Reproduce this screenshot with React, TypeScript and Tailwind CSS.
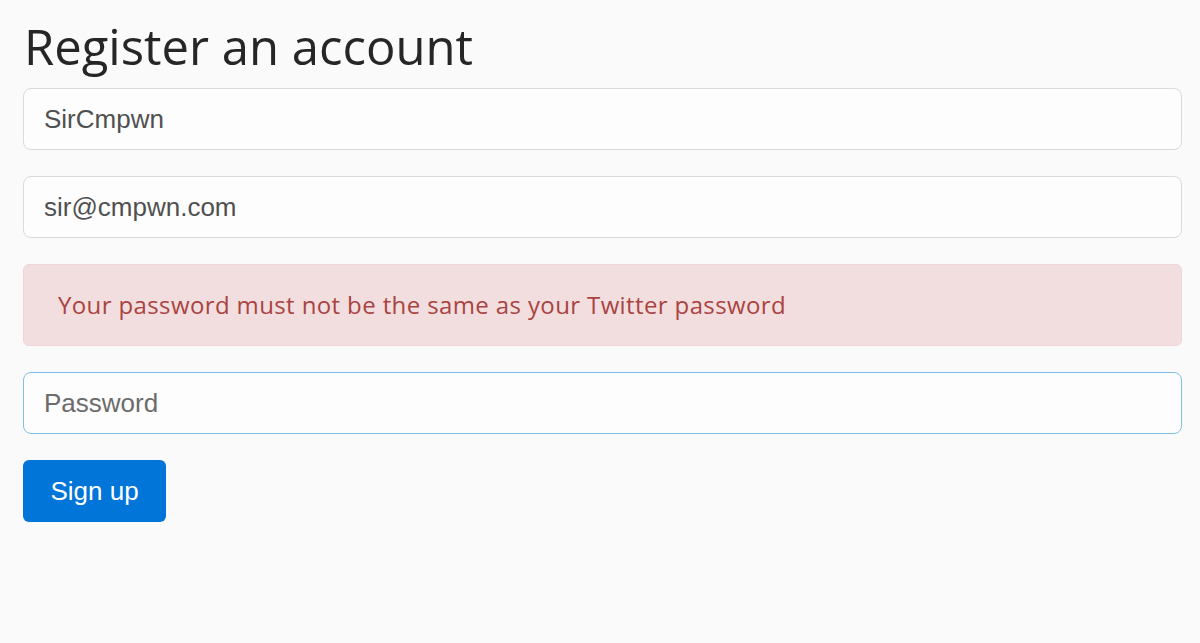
export default function App() {
  return (
    <div className="min-h-[643px] w-full bg-[#fafafa] font-['Liberation_Sans',Arial,sans-serif]">
      <div className="w-[1159px] ml-[23px] pt-[14px]">
        <h1 className="font-['Open_Sans','Noto_Sans',sans-serif] text-[49px] leading-[64px] text-[#262626] mb-[10px] ml-[1px]">
          Register an account
        </h1>
        <form className="flex flex-col gap-[26px]">
          <input
            defaultValue="SirCmpwn"
            className="h-[62px] w-full rounded-[8px] border border-[#dadada] bg-[#fdfdfd] px-[20px] text-[26px] text-[#505050] outline-none"
          />
          <input
            defaultValue="sir@cmpwn.com"
            className="h-[62px] w-full rounded-[8px] border border-[#dadada] bg-[#fdfdfd] px-[20px] text-[26px] text-[#505050] outline-none"
          />
          <div className="h-[82px] flex items-center rounded-[6px] border border-[#f0d6da] bg-[#f2dede] px-[34px] font-['Open_Sans','Noto_Sans',sans-serif] text-[24px] tracking-[0.38px] text-[#a94442]">
            Your password must not be the same as your Twitter password
          </div>
          <input
            type="password"
            placeholder="Password"
            className="h-[62px] w-full rounded-[8px] border border-[#7fc0e6] bg-[#fdfdfd] px-[20px] text-[26px] text-[#505050] placeholder:text-[#6b6b6b] outline-none"
          />
          <div>
            <button
              type="button"
              className="h-[62px] w-[143px] rounded-[6px] bg-[#0275d8] text-[26px] text-white"
            >
              Sign up
            </button>
          </div>
        </form>
      </div>
    </div>
  );
}
